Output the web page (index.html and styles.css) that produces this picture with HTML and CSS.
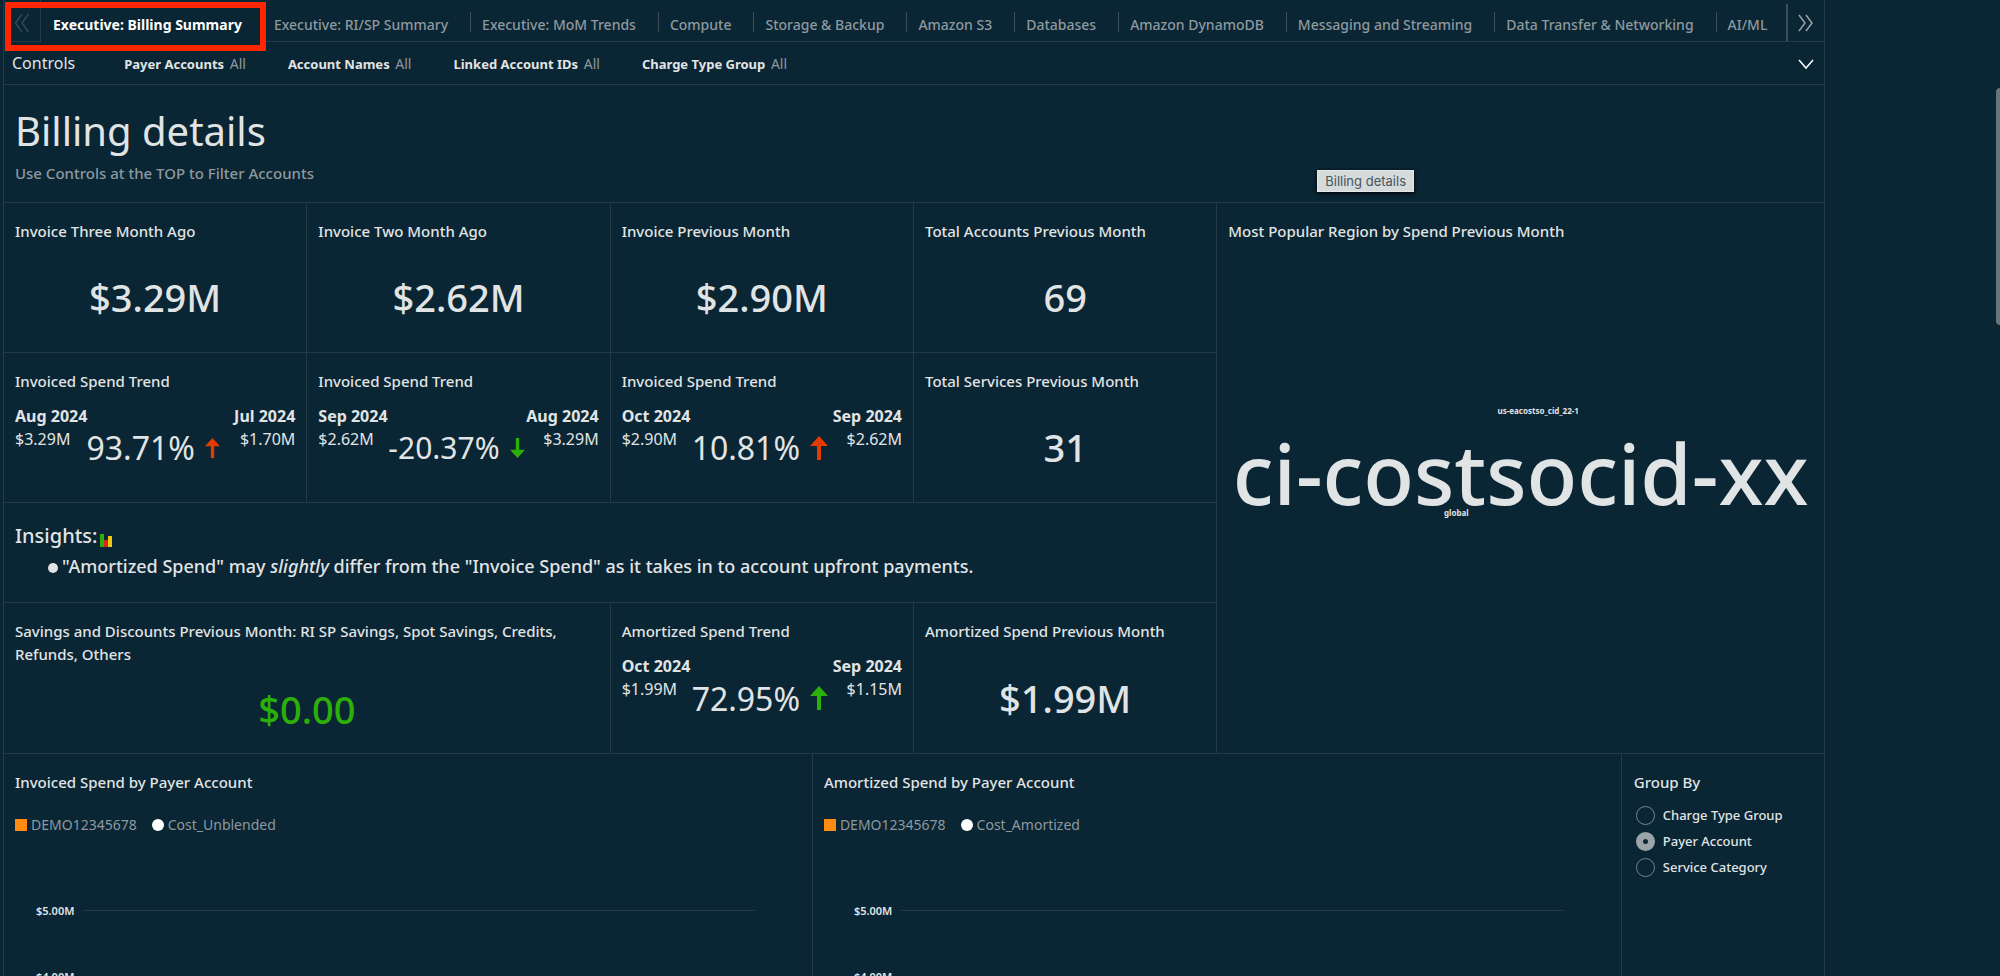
FILE: index.html
```html
<!DOCTYPE html>
<html lang="en">
<head>
<meta charset="utf-8">
<title>Billing Summary</title>
<link rel="stylesheet" href="styles.css">
</head>
<body>
<main class="dashboard">
  <nav class="tabbar">
    <button class="tab-scroll tab-scroll-prev" aria-label="Previous sheets">
      <svg width="16" height="20" viewBox="0 0 16 20"><path d="M8 1 1.500 10 8 19M14.500 1 8 10l6.500 9"/></svg>
    </button>
    <div class="tabs">
      <button class="tab tab-active">Executive: Billing Summary</button>
      <button class="tab">Executive: RI/SP Summary</button>
      <button class="tab">Executive: MoM Trends</button>
      <button class="tab">Compute</button>
      <button class="tab">Storage &amp; Backup</button>
      <button class="tab">Amazon S3</button>
      <button class="tab">Databases</button>
      <button class="tab">Amazon DynamoDB</button>
      <button class="tab">Messaging and Streaming</button>
      <button class="tab">Data Transfer &amp; Networking</button>
      <button class="tab">AI/ML</button>
    </div>
    <button class="tab-scroll tab-scroll-next" aria-label="More sheets">
      <svg width="16" height="18" viewBox="0 0 16 18"><path d="m1 1 6 8-6 8M8 1l6 8-6 8"/></svg>
    </button>
    <span class="highlight"></span>
  </nav>

  <section class="controls">
    <span class="controls-label">Controls</span>
    <button class="control"><b>Payer Accounts</b> All</button>
    <button class="control"><b>Account Names</b> All</button>
    <button class="control"><b>Linked Account IDs</b> All</button>
    <button class="control"><b>Charge Type Group</b> All</button>
    <button class="controls-toggle" aria-label="Expand controls">
      <svg width="18" height="12" viewBox="0 0 18 12"><path d="m2 2 7 8 7-8"/></svg>
    </button>
  </section>

  <header class="heading">
    <h1 class="heading-title">Billing details</h1>
    <p class="heading-note">Use Controls at the TOP to Filter Accounts</p>
    <span class="tooltip">Billing details</span>
  </header>

  <section class="summary">
    <article class="card"><h2 class="card-title">Invoice Three Month Ago</h2><p class="figure">$3.29M</p></article>
    <article class="card"><h2 class="card-title">Invoice Two Month Ago</h2><p class="figure">$2.62M</p></article>
    <article class="card"><h2 class="card-title">Invoice Previous Month</h2><p class="figure">$2.90M</p></article>
    <article class="card"><h2 class="card-title">Total Accounts Previous Month</h2><p class="figure">69</p></article>

    <article class="card card-region">
      <h2 class="card-title">Most Popular Region by Spend Previous Month</h2>
      <div class="cloud">
        <span class="word word-top">us-eacostso_cid_22-1</span>
        <span class="word word-main">ci-costsocid-xx</span>
        <span class="word word-bottom">global</span>
      </div>
    </article>

    <article class="card">
      <h2 class="card-title">Invoiced Spend Trend</h2>
      <div class="trend">
        <div class="trend-side"><b>Aug 2024</b><span>$3.29M</span></div>
        <p class="trend-value">93.71%<svg class="arrow arrow-up" width="15" height="20" viewBox="0 0 18 24"><path d="M9 0l9 10h-7v14H7V10H0z"/></svg></p>
        <div class="trend-side trend-right"><b>Jul 2024</b><span>$1.70M</span></div>
      </div>
    </article>
    <article class="card">
      <h2 class="card-title">Invoiced Spend Trend</h2>
      <div class="trend">
        <div class="trend-side"><b>Sep 2024</b><span>$2.62M</span></div>
        <p class="trend-value trend-value-small">-20.37%<svg class="arrow arrow-good" width="15" height="20" viewBox="0 0 18 24"><path d="M9 24l9-10h-7V0H7v14H0z"/></svg></p>
        <div class="trend-side trend-right"><b>Aug 2024</b><span>$3.29M</span></div>
      </div>
    </article>
    <article class="card">
      <h2 class="card-title">Invoiced Spend Trend</h2>
      <div class="trend">
        <div class="trend-side"><b>Oct 2024</b><span>$2.90M</span></div>
        <p class="trend-value">10.81%<svg class="arrow arrow-up" width="18" height="24" viewBox="0 0 18 24"><path d="M9 0l9 10h-7v14H7V10H0z"/></svg></p>
        <div class="trend-side trend-right"><b>Sep 2024</b><span>$2.62M</span></div>
      </div>
    </article>
    <article class="card"><h2 class="card-title">Total Services Previous Month</h2><p class="figure">31</p></article>

    <article class="card card-insights">
      <h2 class="insights-title">Insights:<svg width="12" height="13" viewBox="0 0 12 13"><path fill="#2bb00a" d="M0 0h4v13H0z"/><path fill="#d9261c" d="M4 6h4v7H4z"/><path fill="#f2c511" d="M8 2h4v11H8z"/></svg></h2>
      <ul class="insights-list">
        <li>"Amortized Spend" may <em>slightly</em> differ from the "Invoice Spend" as it takes in to account upfront payments.</li>
      </ul>
    </article>

    <article class="card card-wide">
      <h2 class="card-title">Savings and Discounts Previous Month: RI SP Savings, Spot Savings, Credits, Refunds, Others</h2>
      <p class="figure figure-good">$0.00</p>
    </article>
    <article class="card">
      <h2 class="card-title">Amortized Spend Trend</h2>
      <div class="trend">
        <div class="trend-side"><b>Oct 2024</b><span>$1.99M</span></div>
        <p class="trend-value">72.95%<svg class="arrow arrow-good" width="18" height="24" viewBox="0 0 18 24"><path d="M9 0l9 10h-7v14H7V10H0z"/></svg></p>
        <div class="trend-side trend-right"><b>Sep 2024</b><span>$1.15M</span></div>
      </div>
    </article>
    <article class="card"><h2 class="card-title">Amortized Spend Previous Month</h2><p class="figure">$1.99M</p></article>
  </section>

  <section class="charts">
    <article class="card">
      <h2 class="card-title">Invoiced Spend by Payer Account</h2>
      <div class="legend">
        <span class="legend-item"><i class="swatch"></i>DEMO12345678</span>
        <span class="legend-item"><i class="swatch swatch-dot"></i>Cost_Unblended</span>
      </div>
      <div class="plot">
        <div class="gridline">$5.00M</div>
        <div class="gridline">$4.00M</div>
      </div>
    </article>
    <article class="card">
      <h2 class="card-title">Amortized Spend by Payer Account</h2>
      <div class="legend">
        <span class="legend-item"><i class="swatch"></i>DEMO12345678</span>
        <span class="legend-item"><i class="swatch swatch-dot"></i>Cost_Amortized</span>
      </div>
      <div class="plot plot-second">
        <div class="gridline">$5.00M</div>
        <div class="gridline">$4.00M</div>
      </div>
    </article>
    <fieldset class="card group">
      <legend class="group-title">Group By</legend>
      <label class="option"><input class="radio" type="radio" name="group">Charge Type Group</label>
      <label class="option"><input class="radio" type="radio" name="group" checked>Payer Account</label>
      <label class="option"><input class="radio" type="radio" name="group">Service Category</label>
    </fieldset>
  </section>
</main>
<div class="scroll-thumb"></div>
</body>
</html>
```
FILE: styles.css
```css
:root {
  --bg: #0a2533;
  --line: #243a47;
  --text: #e1e4e5;
  --muted: #8e999f;
  --good: #2bb00a;
  --bad: #e53b00;
}

* { box-sizing: border-box; }

body {
  margin: 0;
  height: 100vh;
  overflow: hidden;
  background: var(--bg);
  color: var(--text);
  font: 500 15px/23px "Noto Sans", sans-serif;
}

h1, h2, p, ul { margin: 0; padding: 0; font-weight: inherit; }

button {
  margin: 0;
  padding: 0;
  border: 0;
  background: none;
  color: inherit;
  font: inherit;
}

svg { display: block; }

.dashboard {
  display: flex;
  flex-direction: column;
  height: 100vh;
  margin: 0 175px 0 3px;
  border: solid var(--line);
  border-width: 0 1px;
}

/* Sheet tabs */
.tabbar {
  position: relative;
  display: flex;
  height: 42px;
}

.tab-scroll {
  display: flex;
  align-items: center;
  justify-content: center;
  border-bottom: 1px solid var(--line);
}

.tab-scroll path, .controls-toggle path {
  fill: none;
  stroke: currentColor;
  stroke-width: 1.5;
}

.tab-scroll-prev {
  width: 37px;
  padding-top: 4px;
  border-right: 1px solid var(--line);
  color: #33485a;
}

.tab-scroll-next {
  width: 38px;
  margin-top: 4px;
  border-left: 2px solid #3c4f5a;
  color: #98a3a8;
}

.tabs {
  display: flex;
  flex: 1;
  min-width: 0;
  overflow: hidden;
}

.tab {
  flex: none;
  display: flex;
  align-items: center;
  padding: 7px 22px 0 0;
  border-bottom: 1px solid var(--line);
  color: var(--muted);
  font-size: 14px;
  white-space: nowrap;
}

.tab:last-child { flex: 1; }

.tab::before {
  content: "";
  width: 1px;
  height: 20px;
  margin: 0 11px 4px 0;
  background: #3a4d58;
}

.tab-active {
  padding-right: 20px;
  border-color: transparent;
  color: #fff;
  font-weight: 700;
}

.tab-active::before, .tab-active + .tab::before { background: none; }

.highlight {
  position: absolute;
  top: 2px;
  left: 1px;
  width: 261px;
  height: 49px;
  border: 6px solid #ff2600;
}

/* Filter controls */
.controls {
  display: flex;
  align-items: center;
  gap: 42px;
  height: 43px;
  padding: 1px 9px 0 8px;
  border-bottom: 1px solid var(--line);
}

.controls-label { margin-right: 7px; font-size: 16px; font-weight: 400; }

.control {
  color: var(--muted);
  font-size: 14px;
  font-weight: 400;
  white-space: nowrap;
}

.control b { margin-right: 2px; color: var(--text); font-size: 13px; }

.controls-toggle { margin-left: auto; color: #fff; }

/* Heading */
.heading {
  position: relative;
  height: 117px;
  padding: 18px 11px;
}

.heading-title { font-size: 40px; line-height: 56px; font-weight: 400; }

.heading-note { padding-top: 3px; color: var(--muted); }

.tooltip {
  position: absolute;
  right: 410px;
  bottom: 10px;
  padding: 0 7px;
  border: 1px solid #e4e8e8;
  background: #d5dbdb;
  box-shadow: 0 1px 4px #000;
  color: #47555c;
  font: 400 13px/20px Inter, sans-serif;
}

/* Cards */
.summary {
  display: grid;
  grid-template-columns: repeat(6, 1fr);
  grid-template-rows: 150px 150px 100px 151px;
}

.card {
  display: flex;
  flex-direction: column;
  min-width: 0;
  padding: 17px 11px 0;
  border: solid var(--line);
  border-width: 1px 1px 0 0;
}

.card-region {
  grid-column: 5 / 7;
  grid-row: 1 / 5;
}

.card-region, .charts .card:last-child { border-right: 0; }

.card-insights { grid-column: 1 / 5; }

.card-wide { grid-column: span 2; }

.card-title { font-size: 15px; line-height: 23px; }

.figure {
  display: flex;
  flex: 1;
  align-items: center;
  justify-content: center;
  font-size: 38px;
}

.figure-good { color: var(--good); }

.trend {
  display: grid;
  flex: 1;
  grid-template-columns: 55px 1fr 55px;
  white-space: nowrap;
}

.trend-side {
  display: flex;
  flex-direction: column;
  padding-top: 12px;
  font-size: 16px;
  font-weight: 400;
}

.trend-right { align-items: flex-end; }

.trend-value {
  display: flex;
  align-items: center;
  justify-content: center;
  gap: 10px;
  padding-right: 4px;
  font-size: 32px;
  font-weight: 400;
}

.trend-value-small { font-size: 30px; }

.arrow { flex: none; }

.arrow-up { fill: var(--bad); }

.arrow-good { fill: var(--good); }

.insights-title {
  display: flex;
  align-items: center;
  gap: 2px;
  font-size: 20px;
  line-height: 32px;
}

.insights-title svg { margin-top: 8px; }

.insights-list {
  padding-left: 33px;
  font-size: 18px;
  line-height: 28px;
  list-style: none;
}

.insights-list li::before {
  content: "";
  display: inline-block;
  width: 10px;
  height: 10px;
  margin-right: 4px;
  border-radius: 50%;
  background: currentColor;
}

/* Word cloud */
.cloud { position: relative; flex: 1; }

.word {
  position: absolute;
  transform: translate(-50%, -50%);
  font-size: 8px;
  line-height: 12px;
  font-weight: 700;
  white-space: nowrap;
}

.word-top { left: 53%; top: 33%; }

.word-main {
  left: 50%;
  top: 45%;
  font-size: 83px;
  line-height: 84px;
  font-weight: 500;
}

.word-bottom { left: 39%; top: 53%; }

/* Charts */
.charts {
  display: grid;
  flex: 1;
  grid-template-columns: 4fr 4fr 1fr;
  min-height: 0;
}

.legend {
  display: flex;
  gap: 15px;
  padding-top: 19px;
  color: var(--muted);
  font-size: 14px;
  font-weight: 400;
}

.legend-item { display: flex; align-items: center; gap: 4px; }

.swatch { width: 12px; height: 12px; background: #ff8c0f; }

.swatch-dot { border-radius: 50%; background: #fff; }

.plot {
  display: flex;
  flex-direction: column;
  gap: 43px;
  margin: 63px 46px 0 21px;
}

.plot-second { margin-left: 30px; }

.gridline {
  display: flex;
  align-items: center;
  gap: 9px;
  font-size: 11px;
  font-weight: 600;
}

.gridline::after {
  content: "";
  flex: 1;
  height: 1px;
  background: var(--line);
}

.group { margin: 0; padding-left: 12px; border-left: 0; }

.group-title { float: left; padding: 0 0 8px; font-size: 15px; }

.option {
  display: flex;
  align-items: center;
  gap: 8px;
  height: 26px;
  font-size: 13px;
}

.radio {
  appearance: none;
  width: 19px;
  height: 19px;
  margin: 0 0 0 2px;
  border: 1px solid #77848b;
  border-radius: 50%;
}

.radio:checked {
  border: 7px solid #9ba4a9;
}

.scroll-thumb {
  position: fixed;
  top: 88px;
  right: -4px;
  width: 8px;
  height: 237px;
  border-radius: 4px;
  background: #66757c;
}
```
